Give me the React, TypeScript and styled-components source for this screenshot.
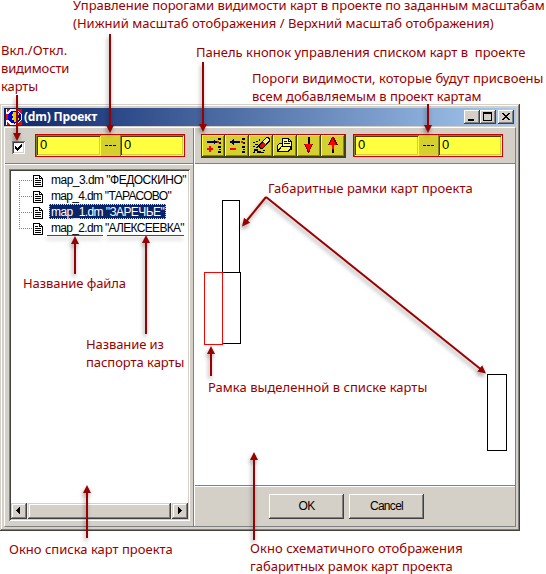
import React from "react";
import styled, { createGlobalStyle, css } from "styled-components";

const face = "#d4d0c8";
const ink = "#990000";
const yellow = "#ffff40";
const olive = "#d4d030";

const GlobalStyle = createGlobalStyle`
  * { box-sizing: border-box; }
  body { margin: 0; background: #fff; overflow: hidden; }
`;

const Page = styled.main`
  position: relative;
  width: 546px;
  height: 574px;
  padding-top: 104px;
  font: 12px/16px "Liberation Sans", sans-serif;
  color: #000;
  background: #fff;
`;

const raised = css`
  background: ${face};
  box-shadow: inset -1px -1px #404040, inset 1px 1px #fff, inset -2px -2px #808080;
`;

const Window = styled.section`
  width: 520px;
  height: 427px;
  padding: 4px;
  display: flex;
  flex-direction: column;
  gap: 1px;
  background: ${face};
  box-shadow: inset -1px -1px #404040, inset 1px 1px ${face}, inset -2px -2px #808080, inset 2px 2px #fff;
`;

const TitleBar = styled.header`
  height: 18px;
  flex: none;
  display: flex;
  align-items: center;
  padding: 0 2px 0 2px;
  background: linear-gradient(90deg, #0a246a, #a6caf0);
`;

const Title = styled.h1`
  flex: 1;
  margin: 0 0 0 2px;
  font: bold 12px/18px "Noto Sans", sans-serif;
  letter-spacing: -0.2px;
  color: #fff;
`;

const CaptionButton = styled.button<{ $gap?: number }>`
  ${raised}
  width: 16px;
  height: 14px;
  padding: 0;
  border: 0;
  margin-left: ${(p) => p.$gap ?? 0}px;
  display: flex;
`;

const Body = styled.div`
  flex: 1;
  min-height: 0;
  display: grid;
  grid-template-columns: 189px 1fr;
  border: 1px solid #808080;
  border-top-color: #fff;
  border-left-color: #fff;
`;

const LeftPane = styled.div`
  display: flex;
  flex-direction: column;
  border-right: 1px solid #808080;
`;

const RightPane = styled.div`
  display: flex;
  flex-direction: column;
  border-left: 1px solid #fff;
`;

const ToolRow = styled.div<{ $left: number; $gap: number }>`
  height: 36px;
  flex: none;
  display: flex;
  align-items: flex-start;
  gap: ${(p) => p.$gap}px;
  padding: 6px 0 0 ${(p) => p.$left}px;
  border-bottom: 1px solid #808080;
`;

const CheckBox = styled.div`
  width: 13px;
  height: 13px;
  margin-top: 7px;
  display: flex;
  background: #fff;
  box-shadow: inset 1px 1px #808080, inset -1px -1px #fff, inset 2px 2px #404040, inset -2px -2px ${face};
`;

const RangeBox = styled.div`
  width: 150px;
  height: 23px;
  display: grid;
  grid-template-columns: 65px 19px 64px;
  border: 1px solid #cc0000;
  background: ${olive};
`;

const RangeField = styled.div`
  padding: 0 0 0 4px;
  font-size: 13px;
  line-height: 20px;
  background: ${yellow};
  box-shadow: inset 1px 1px #8a8420, inset -1px -1px ${yellow}, inset 2px 2px #404010, inset -2px -2px ${olive};
`;

const RangeSeparator = styled.div`
  display: flex;
  align-items: center;
  justify-content: center;
`;

const ButtonPanel = styled.div`
  width: 145px;
  height: 24px;
  display: grid;
  grid-template-columns: 23px repeat(5, 24px);
  border: 1px solid #cc0000;
`;

const ToolButton = styled.button`
  padding: 0;
  border: 0;
  display: flex;
  justify-content: flex-end;
  align-items: flex-end;
  overflow: hidden;
  background: ${olive};
  box-shadow: inset -1px -1px #404010, inset 1px 1px ${yellow}, inset -2px -2px #8a8420;
`;

const ListArea = styled.div`
  flex: 1;
  padding: 4px 4px 5px;
  border-top: 1px solid #fff;
  display: flex;
`;

const ListBox = styled.div`
  flex: 1;
  padding: 2px;
  display: flex;
  flex-direction: column;
  background: #fff;
  box-shadow: inset 1px 1px #808080, inset -1px -1px #fff, inset 2px 2px #404040, inset -2px -2px ${face};
`;

const Tree = styled.ul`
  flex: 1;
  margin: 0;
  padding: 1px 0 0 8px;
  list-style: none;
`;

const TreeRow = styled.li`
  height: 16px;
  display: flex;
`;

const MapName = styled.span<{ $spacing: number; $selected?: boolean }>`
  height: 15px;
  margin-left: 5px;
  padding: 0 2px;
  line-height: 16px;
  white-space: pre;
  letter-spacing: ${(p) => p.$spacing}px;
  ${(p) =>
    p.$selected &&
    css`
      color: #fff;
      background: #0a246a;
      outline: 1px dotted #f5db95;
      outline-offset: -1px;
    `}
`;

const ScrollBar = styled.div`
  height: 16px;
  display: grid;
  grid-template-columns: 16px 143px 16px;
  justify-content: space-between;
  background: #ebe9e4;
`;

const ScrollPart = styled.div`
  ${raised}
  box-shadow: inset -1px -1px #404040, inset 1px 1px ${face}, inset -2px -2px #808080, inset 2px 2px #fff;
  display: flex;
`;

const Canvas = styled.div`
  position: relative;
  height: 322px;
  flex: none;
  background: #fff;
  border-bottom: 1px solid #808080;
`;

const MapFrame = styled.div<{ $x: number; $y: number; $w: number; $h: number; $active?: boolean }>`
  position: absolute;
  left: ${(p) => p.$x}px;
  top: ${(p) => p.$y}px;
  width: ${(p) => p.$w}px;
  height: ${(p) => p.$h}px;
  border: 1px solid ${(p) => (p.$active ? "#ff0000" : "#000")};
`;

const Footer = styled.footer`
  flex: 1;
  display: flex;
  align-items: flex-start;
  gap: 5px;
  padding: 7px 0 0 74px;
  border-top: 1px solid #fff;
`;

const DialogButton = styled.button`
  ${raised}
  width: 75px;
  height: 25px;
  padding: 0 0 1px;
  border: 0;
  font: 12px/16px "Liberation Sans", sans-serif;
  letter-spacing: -0.7px;
  color: #000;
`;

const Callouts = styled.svg`
  position: absolute;
  inset: 0;
  pointer-events: none;
  filter: drop-shadow(-1px 3px 2px rgba(0, 0, 0, 0.4));
`;

const Note = styled.p<{ $x: number; $y: number }>`
  position: absolute;
  left: ${(p) => p.$x}px;
  top: ${(p) => p.$y}px;
  margin: 0;
  font: 13px/18px "Noto Sans", sans-serif;
  white-space: pre;
  color: ${ink};
`;

const NoteLine = styled.span<{ $spacing?: number }>`
  display: block;
  letter-spacing: ${(p) => p.$spacing ?? 0}px;
`;

const Pixels = ({ w, h, children }: { w: number; h: number; children: React.ReactNode }) => (
  <svg width={w} height={h} viewBox={`0 0 ${w} ${h}`} shapeRendering="crispEdges">
    {children}
  </svg>
);

const AppIcon = () => (
  <Pixels w={16} h={16}>
    <rect width="16" height="16" fill="#fff" />
    <path d="M0 5h4v6H0zM1 0h3L1 3zM10 0h6v5zM1 13l3 3H1zM16 11v5h-6z" fill="#f00" />
    <circle cx="8.500" cy="8" r="6.500" fill="#0000e0" />
    <path d="M7 3h3v2h2v2h-2v2h2v3h-2v1H8v-2H6V9h1V7H6V5h1z" fill="#ffe600" />
    <path d="M11 4h2v2h-2zM11 9h2v2h-2z" fill="#ffe600" />
  </Pixels>
);

const PageIcon = () => (
  <Pixels w={12} h={16}>
    <path d="M1.500 3.500h6l3 3v8h-9z" fill="#fff" stroke="#000" />
    <path d="M7 3v4h4V6H8V3zM3 6h3v1H3zM3 8h6v1H3zM3 10h6v1H3zM3 12h6v1H3z" />
  </Pixels>
);

const Branch = ({ first, last }: { first: boolean; last: boolean }) => (
  <Pixels w={13} h={16}>
    <path
      d={`M.5 ${first ? 8 : 0}V${last ? 9 : 16}M0 8.500h13`}
      stroke="#808080"
      strokeDasharray="1 1"
      fill="none"
    />
  </Pixels>
);

const listMarks = "M18 5h3v2h-3zM19 9h2v2h-2zM18 13h3v2h-3zM19 16h2v1h-2zM18 18h3v2h-3z";

const toolIcons = [
  <>
    <path d="M6 8h7V6h1v1h1v1h2v2h-2v1h-1v1h-1v-2H6z" fill="#000050" />
    <path d={listMarks} />
    <path d="M17 8h2v2h-2zM8 13h2v2h2v2h-2v2H8v-2H6v-2h2z" fill="#f00" />
  </>,
  <>
    <path d="M16 8H10V6H9v1H8v1H6v2h2v1h1v1h1v-2h6z" fill="#000050" />
    <path d={listMarks} />
    <path d="M17 8h2v2h-2zM6 15h6v2H6z" fill="#f00" />
  </>,
  <>
    <path d="M10 12l8-8h2l2 2v2l-8 8h-2l-2-2z" />
    <path d="M15 8l4-3 2 2-4 4z" fill="#f0efa0" />
    <path d="M12 12l3-3 3 3-4 3h-1z" fill="#f00" />
    <path d="M5 9h2v1H5zM8 8h2v1H8zM7 11h3v1H7zM9 13h1v2H8v1h2v2h3v1h3v1H9v-2H7v2H5v-1h1v-3h2v-2zM15 17h2v1h-2zM11 6h1v2h-1zM5 13h2v1H5z" />
  </>,
  <>
    <path d="M10.500 14.500V5.500h6l3 3v8h-5z" fill="#ffff90" stroke="#000" />
    <path d="M16 5v4h4V8h-3V5zM12 8h3v1h-3zM12 10h6v1h-6z" />
    <path d="M5.500 18.500v-6l2-2h3v3h7l-3 5z" fill={yellow} stroke="#000" />
    <path d="M5.500 18.500l4-5h10l-3 5z" fill={yellow} stroke="#000" />
  </>,
  <>
    <path d="M12 4h2v7h-2z" />
    <path d="M8 11h9v1h-1v2h-1v2h-1v3h-1v1h-1v-1h-1v-3h-1v-2H9v-2H8z" fill="#600000" />
    <path d="M9 11h7v1h-1v2h-1v3h-1v1h-1v-2h-1v-2h-1v-2H9z" fill="#f00" />
  </>,
  <>
    <path d="M12 12h2v8h-2z" />
    <path d="M8 12v-1h1V9h1V7h1V5h1V4h2v1h1v2h1v2h1v2h1v1z" fill="#600000" />
    <path d="M9 11h1V9h1V7h1V5h1v2h1v2h1v2h1v1h-2v4h-2v-4H9z" fill="#f00" />
  </>,
];

const Range = () => (
  <RangeBox>
    <RangeField>0</RangeField>
    <RangeSeparator>
      <Pixels w={11} h={1}>
        <path d="M0 0h3v1H0zM4 0h3v1H4zM8 0h3v1H8z" />
      </Pixels>
    </RangeSeparator>
    <RangeField>0</RangeField>
  </RangeBox>
);

const maps = [
  { name: 'map_3.dm "ФЕДОСКИНО"', spacing: -0.52 },
  { name: 'map_4.dm "ТАРАСОВО"', spacing: -0.69 },
  { name: 'map_1.dm "ЗАРЕЧЬЕ"', spacing: -0.59, selected: true },
  { name: 'map_2.dm "АЛЕКСЕЕВКА"', spacing: -0.68 },
];

type Line = [text: string, spacing?: number];
const notes: { x: number; y: number; lines: Line[] }[] = [
  {
    x: 73,
    y: -4,
    lines: [
      ["Управление порогами видимости карт в проекте по заданным масштабам", -0.04],
      ["(Нижний масштаб отображения / Верхний масштаб отображения)", 0.02],
    ],
  },
  { x: 1, y: 41, lines: [["Вкл./Откл.", 0.1], ["видимости", -0.15], ["карты", -0.1]] },
  { x: 196, y: 43, lines: [["Панель кнопок управления списком карт в  проекте"]] },
  {
    x: 252,
    y: 69,
    lines: [["Пороги видимости, которые будут присвоены", 0.03], ["всем добавляемым в проект картам", -0.02]],
  },
  { x: 268, y: 179, lines: [["Габаритные рамки карт проекта", 0.02]] },
  { x: 23, y: 274, lines: [["Название файла", -0.08]] },
  { x: 86, y: 335, lines: [["Название из", -0.1], ["паспорта карты", -0.05]] },
  { x: 208, y: 378, lines: [["Рамка выделенной в списке карты", 0.03]] },
  { x: 9, y: 540, lines: [["Окно списка карт проекта"]] },
  { x: 250, y: 539, lines: [["Окно схематичного отображения", 0.05], ["габаритных рамок карт проекта"]] },
];

const arrows = [
  "M17 95V134",
  "M110 34V126",
  "M203 62V125",
  "M428 104V126",
  "M75 274V243",
  "M146 334V242",
  "M211 376V353",
  "M87 538V492",
  "M254 540V459",
  "M266 197L246.500 221",
  "M266 197L480.500 369",
];

export default function App() {
  return (
    <>
      <GlobalStyle />
      <Page>
        <Window>
          <TitleBar>
            <AppIcon />
            <Title>(dm) Проект</Title>
            <CaptionButton aria-label="Minimize">
              <Pixels w={16} h={14}>
                <path d="M4 9h6v2H4z" />
              </Pixels>
            </CaptionButton>
            <CaptionButton aria-label="Maximize">
              <Pixels w={16} h={14}>
                <path d="M3 2h9v9H3zM4 4v6h7V4z" fillRule="evenodd" />
              </Pixels>
            </CaptionButton>
            <CaptionButton aria-label="Close" $gap={2}>
              <Pixels w={16} h={14}>
                <path d="M4 3h2v1h1v1h2V4h1V3h2v1h-1v1h-1v1H9v1h1v1h1v1h1v1h-2V9H9V8H7v1H6v1H4V9h1V8h1V7h1V6H6V5H5V4H4z" />
              </Pixels>
            </CaptionButton>
          </TitleBar>
          <Body>
            <LeftPane>
              <ToolRow $left={7} $gap={10}>
                <CheckBox>
                  <Pixels w={13} h={13}>
                    <path d="M3 5v3l2 2 5-5V2L5 7z" />
                  </Pixels>
                </CheckBox>
                <Range />
              </ToolRow>
              <ListArea>
                <ListBox>
                  <Tree>
                    {maps.map((m, i) => (
                      <TreeRow key={m.name}>
                        <Branch first={i === 0} last={i === maps.length - 1} />
                        <PageIcon />
                        <MapName $spacing={m.spacing} $selected={m.selected}>
                          {m.name}
                        </MapName>
                      </TreeRow>
                    ))}
                  </Tree>
                  <ScrollBar>
                    <ScrollPart>
                      <Pixels w={16} h={16}>
                        <path d="M9 4v7H8v-1H7V9H6V8H5V7h1V6h1V5h1V4z" />
                      </Pixels>
                    </ScrollPart>
                    <ScrollPart />
                    <ScrollPart>
                      <Pixels w={16} h={16}>
                        <path d="M6 4v7h1v-1h1V9h1V8h1V7H9V6H8V5H7V4z" />
                      </Pixels>
                    </ScrollPart>
                  </ScrollBar>
                </ListBox>
              </ListArea>
            </LeftPane>
            <RightPane>
              <ToolRow $left={6} $gap={7}>
                <ButtonPanel>
                  {toolIcons.map((icon, i) => (
                    <ToolButton key={i}>
                      <Pixels w={24} h={23}>
                        <g transform="translate(-1 -1)">{icon}</g>
                      </Pixels>
                    </ToolButton>
                  ))}
                </ButtonPanel>
                <Range />
              </ToolRow>
              <Canvas>
                <MapFrame $x={27} $y={36} $w={18} $h={73} />
                <MapFrame $x={27} $y={108} $w={19} $h={72} />
                <MapFrame $x={9} $y={108} $w={19} $h={73} $active />
                <MapFrame $x={292} $y={210} $w={20} $h={77} />
              </Canvas>
              <Footer>
                <DialogButton>OK</DialogButton>
                <DialogButton>Cancel</DialogButton>
              </Footer>
            </RightPane>
          </Body>
        </Window>
        <Callouts width="546" height="574" viewBox="0 0 546 574">
          <defs>
            <marker id="tip" markerUnits="userSpaceOnUse" markerWidth="9" markerHeight="9" refX="1" refY="4" orient="auto">
              <path d="M0 0l8 4-8 4z" fill={ink} />
            </marker>
          </defs>
          {arrows.map((d) => (
            <path key={d} d={d} stroke={ink} strokeWidth="2" fill="none" markerEnd="url(#tip)" />
          ))}
          <path d="M47 235.500h56M107 235.500h77" stroke="#b02020" />
        </Callouts>
        {notes.map((n) => (
          <Note key={n.lines[0][0]} $x={n.x} $y={n.y}>
            {n.lines.map(([text, spacing]) => (
              <NoteLine key={text} $spacing={spacing}>
                {text}
              </NoteLine>
            ))}
          </Note>
        ))}
      </Page>
    </>
  );
}
